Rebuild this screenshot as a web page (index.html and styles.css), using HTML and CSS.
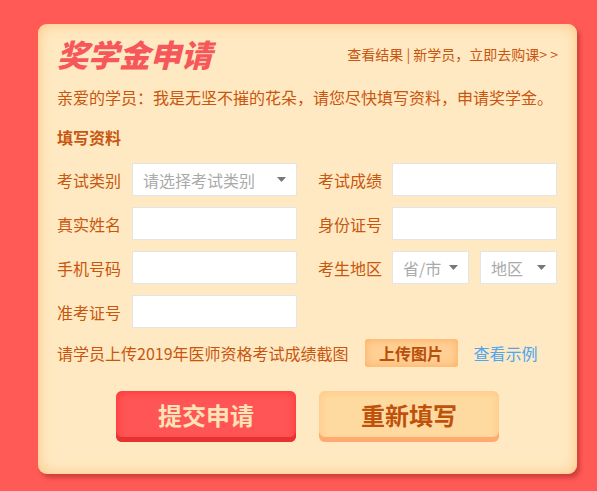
FILE: index.html
```html
<!DOCTYPE html>
<html lang="zh-CN">
<head>
    <meta charset="UTF-8">
    <meta name="viewport" content="width=device-width, initial-scale=1.0">
    <title>奖学金申请</title>
    <link rel="stylesheet" href="styles.css">
</head>
<body>

    <div class="card">
        <div class="card-head">
            <h1>奖学金申请</h1>
            <div class="links"><a href="#">查看结果</a> | <a href="#">新学员，立即去购课&gt; &gt;</a></div>
        </div>

        <p class="intro">亲爱的学员：我是无坚不摧的花朵，请您尽快填写资料，申请奖学金。</p>

        <h3>填写资料</h3>

        <div class="form-grid">
            <div class="field">
                <label>考试类别</label>
                <div class="select wide">
                    <span>请选择考试类别</span>
                    <svg width="9" height="5" viewBox="0 0 9 5"><path d="M0 0H9L4.5 5Z" fill="#777"/></svg>
                </div>
            </div>
            <div class="field">
                <label>考试成绩</label>
                <input type="text">
            </div>
            <div class="field">
                <label>真实姓名</label>
                <input type="text">
            </div>
            <div class="field">
                <label>身份证号</label>
                <input type="text">
            </div>
            <div class="field">
                <label>手机号码</label>
                <input type="text">
            </div>
            <div class="field">
                <label>考生地区</label>
                <div class="pair">
                    <div class="select">
                        <span>省/市</span>
                        <svg width="9" height="5" viewBox="0 0 9 5"><path d="M0 0H9L4.5 5Z" fill="#777"/></svg>
                    </div>
                    <div class="select">
                        <span>地区</span>
                        <svg width="9" height="5" viewBox="0 0 9 5"><path d="M0 0H9L4.5 5Z" fill="#777"/></svg>
                    </div>
                </div>
            </div>
            <div class="field">
                <label>准考证号</label>
                <input type="text">
            </div>
        </div>

        <div class="upload-row">
            <span>请学员上传2019年医师资格考试成绩截图</span>
            <button class="upload-btn">上传图片</button>
            <a href="#" class="sample">查看示例</a>
        </div>

        <div class="actions">
            <button class="btn btn-submit">提交申请</button>
            <button class="btn btn-reset">重新填写</button>
        </div>
    </div>

</body>
</html>
```

FILE: styles.css
```css
body {
    font-family: "Noto Sans CJK SC", "Liberation Sans", sans-serif;
    background-color: #ff5a55;
    color: #c8560f;
    margin: 0;
    padding: 24px 20px 17px 38px;
}
.card {
    width: 539px;
    height: 450px;
    box-sizing: border-box;
    padding: 7px 20px 0 19px;
    background-color: #ffe9c2;
    border-radius: 9px;
    box-shadow: inset 0 0 14px rgba(255, 190, 120, 0.9), 3px 4px 4px rgba(170, 40, 40, 0.55);
}
.card-head {
    display: flex;
    justify-content: space-between;
    align-items: center;
    height: 44px;
}
h1 {
    margin: 0;
    font-size: 31px;
    font-style: italic;
    font-weight: 900;
    color: #f6575a;
}
.links {
    font-size: 14px;
    padding-top: 2px;
    margin-right: -1px;
}
.links a {
    color: #c8560f;
    text-decoration: none;
}
.intro {
    margin: 10px 0 0;
    font-size: 16px;
    line-height: 24px;
}
h3 {
    margin: 16px 0 0;
    font-size: 16px;
    line-height: 24px;
}
.form-grid {
    display: grid;
    grid-template-columns: 240px 240px;
    column-gap: 21px;
    row-gap: 11px;
    margin-top: 14px;
}
.field {
    display: flex;
    align-items: center;
    gap: 11px;
}
.field label {
    width: 64px;
    font-size: 16px;
}
.field:nth-child(even) {
    gap: 10px;
}
.field input,
.select {
    width: 165px;
    height: 33px;
    box-sizing: border-box;
    border: 1px solid #e4e4e4;
    background-color: #fff;
    margin: 0;
    padding: 0 10px;
}
.select {
    display: flex;
    align-items: center;
    justify-content: space-between;
    color: #aaa;
    font-size: 16px;
}
.pair {
    display: flex;
    gap: 11px;
}
.pair .select {
    width: 77px;
}
.upload-row {
    display: flex;
    align-items: center;
    margin-top: 11px;
    height: 27px;
    font-size: 16px;
}
.upload-btn {
    margin-left: 16px;
    width: 93px;
    height: 28px;
    border: none;
    border-radius: 3px;
    background-color: #ffcf94;
    box-shadow: inset 0 0 8px rgba(255, 160, 80, 0.8);
    color: #b8500c;
    font-family: inherit;
    font-size: 16px;
    font-weight: bold;
    padding: 0;
}
.sample {
    margin-left: 16px;
    color: #4ea5f0;
    text-decoration: none;
}
.actions {
    display: flex;
    gap: 23px;
    margin-top: 25px;
    padding-left: 59px;
}
.btn {
    width: 180px;
    height: 51px;
    border: none;
    border-radius: 6px;
    font-family: inherit;
    font-size: 24px;
    font-weight: bold;
    padding: 0 0 5px;
}
.btn-submit {
    background-color: #ff5556;
    color: #ffe2b6;
    box-shadow: inset 0 -5px 0 #e83232, inset 0 0 8px #ff2e2e;
}
.btn-reset {
    background-color: #ffdaa0;
    color: #bf520b;
    box-shadow: inset 0 -5px 0 #ffaa70, inset 0 0 10px #ffc37f;
}
```
